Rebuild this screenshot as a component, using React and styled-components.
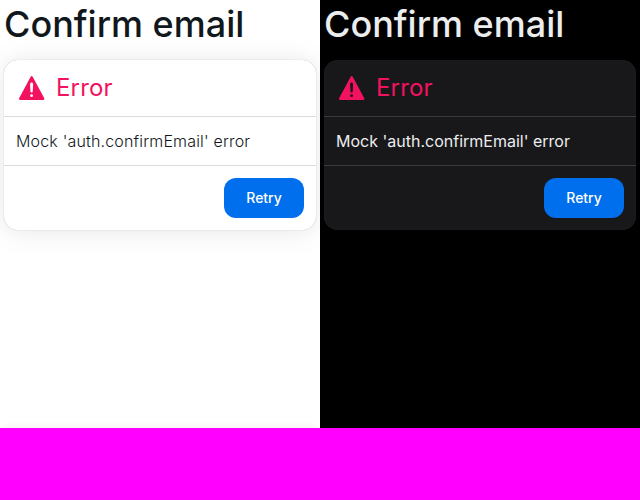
import React from "react";
import styled, { createGlobalStyle, ThemeProvider } from "styled-components";

const light = {
  bg: "#ffffff", text: "#11181c", card: "#ffffff", line: "rgba(17,17,17,0.15)", mark: "#ffffff",
  weight: 300, tracking: "0.17px",
  shadow: "0 0 15px rgba(0,0,0,0.03), 0 2px 30px rgba(0,0,0,0.08), 0 0 1px rgba(0,0,0,0.3)",
  edge: "0 0 10px rgba(0,0,0,0.08)",
};
const dark = {
  bg: "#000000", text: "#ecedee", card: "#18181b", line: "rgba(255,255,255,0.15)", mark: "#18181b",
  weight: 400, tracking: "normal",
  shadow: "inset 0 0 1px rgba(255,255,255,0.15), 0 0 15px rgba(0,0,0,0.06), 0 2px 30px rgba(0,0,0,0.22)",
  edge: "none",
};

const Global = createGlobalStyle`
  body { margin: 0; background: #ff00ff; font-family: Inter, sans-serif; }
  *, *::before, *::after { box-sizing: border-box; }
`;
const Stage = styled.main`
  display: grid;
  grid-template-columns: 1fr 1fr;
  height: 428px;
`;
const Pane = styled.section`
  display: flex;
  flex-direction: column;
  padding: 4px 4px 0;
  overflow: hidden;
  background: ${({ theme }) => theme.bg};
  color: ${({ theme }) => theme.text};
`;
const Title = styled.h1`
  margin: 0 0 16px;
  font-size: 36px;
  line-height: 40px;
  font-weight: 500;
`;
const Card = styled.article`
  border-radius: 14px;
  background: ${({ theme }) => theme.card};
  box-shadow: ${({ theme }) => theme.shadow};
`;
const BottomEdge = styled.div`
  flex: none;
  height: 20px;
  margin: auto 0 -20px;
  box-shadow: ${({ theme }) => theme.edge};
`;
const Header = styled.header`
  display: flex;
  align-items: center;
  gap: 8px;
  height: 56px;
  padding: 12px;
  color: #f31260;
`;
const Heading = styled.h2`
  margin: 0;
  font-size: 24px;
  line-height: 32px;
  font-weight: 400;
  letter-spacing: 0.15px;
`;
const Divider = styled.hr`
  height: 1px;
  margin: 0;
  border: 0;
  background: ${({ theme }) => theme.line};
`;
const Message = styled.p`
  margin: 0;
  padding: 12px;
  font-size: 16px;
  line-height: 24px;
  font-weight: ${({ theme }) => theme.weight};
  letter-spacing: ${({ theme }) => theme.tracking};
`;
const Footer = styled.footer`
  display: flex;
  justify-content: flex-end;
  padding: 12px;
`;
const Button = styled.button`
  width: 80px;
  height: 40px;
  padding: 0;
  border: 0;
  border-radius: 12px;
  background: #006fee;
  color: #fff;
  font: 500 14px/20px Inter, sans-serif;
  letter-spacing: -0.05px;
`;
const Icon = styled.svg`
  width: 32px;
  height: 32px;
  fill: currentColor;
`;
const Mark = styled.g`
  fill: ${({ theme }) => theme.mark};
`;

const WarningIcon = () => (
  <Icon viewBox="0 0 32 32" aria-hidden="true">
    <path d="M14.65 4.8c.6-1.05 1.45-1.05 2.05 0L28.15 26c.55 1.05.05 2-1.1 2H4.35c-1.15 0-1.65-.95-1.1-2Z" />
    <Mark>
      <path d="M14.1 12.2c0-2.3 3-2.3 3 0l-.35 7.2c-.1 1.5-2.2 1.5-2.3 0Z" />
      <circle cx="15.6" cy="23.7" r="1.4" />
    </Mark>
  </Icon>
);

const ErrorPane = ({ theme }) => (
  <ThemeProvider theme={theme}>
    <Pane>
      <Title>Confirm email</Title>
      <Card>
        <Header><WarningIcon /><Heading>Error</Heading></Header>
        <Divider />
        <Message>Mock 'auth.confirmEmail' error</Message>
        <Divider />
        <Footer><Button>Retry</Button></Footer>
      </Card>
      <BottomEdge />
    </Pane>
  </ThemeProvider>
);

export default function App() {
  return (
    <>
      <Global />
      <Stage>
        <ErrorPane theme={light} />
        <ErrorPane theme={dark} />
      </Stage>
    </>
  );
}
